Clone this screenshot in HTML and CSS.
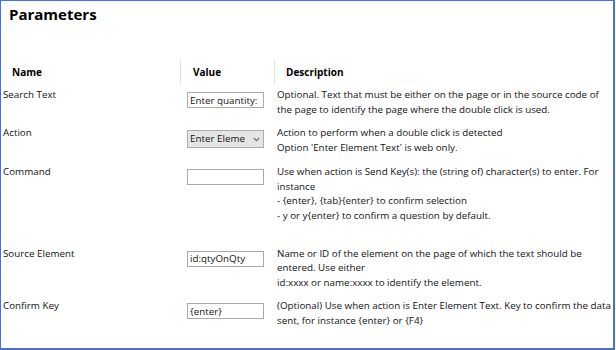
FILE: index.html
```html
<!DOCTYPE html>
<html lang="en">
<head>
<meta charset="utf-8">
<title>Parameters</title>
<link rel="stylesheet" href="styles.css">
</head>
<body>
<div class="frame">
  <h1 class="title">Parameters</h1>
  <div class="table">
    <div class="th th-name">Name</div>
    <div class="th th-sep">Value</div>
    <div class="th th-sep th-desc">Description</div>

    <div class="cell label">Search Text</div>
    <div class="cell value"><input class="field" type="text" value="Enter quantity:"></div>
    <div class="cell desc">Optional. Text that must be either on the page or in the source code of<br>the page to identify the page where the double click is used.</div>

    <div class="cell label row2">Action</div>
    <div class="cell value row2">
      <div class="dropdown"><span class="dd-text">Enter Element Text</span><svg class="dd-arrow" width="7" height="5" viewBox="0 0 7 5"><path d="M0.8 1 L3.5 3.7 L6.2 1" fill="none" stroke="#6b6b6b" stroke-width="1.1"/></svg></div>
    </div>
    <div class="cell desc row2">Action to perform when a double click is detected<br>Option 'Enter Element Text' is web only.</div>

    <div class="cell label">Command</div>
    <div class="cell value"><input class="field" type="text" value=""></div>
    <div class="cell desc">Use when action is Send Key(s): the (string of) character(s) to enter. For<br>instance<br>- {enter}, {tab}{enter} to confirm selection<br>- y or y{enter} to confirm a question by default.<br>&nbsp;</div>

    <div class="cell label">Source Element</div>
    <div class="cell value"><input class="field" type="text" value="id:qtyOnQty"></div>
    <div class="cell desc">Name or ID of the element on the page of which the text should be<br>entered. Use either<br>id:xxxx or name:xxxx to identify the element.</div>

    <div class="cell label">Confirm Key</div>
    <div class="cell value"><input class="field" type="text" value="{enter}"></div>
    <div class="cell desc">(Optional) Use when action is Enter Element Text. Key to confirm the data<br>sent, for instance {enter} or {F4}</div>
  </div>
</div>
</body>
</html>
```

FILE: styles.css
```css
* { box-sizing: border-box; }

html, body {
  margin: 0;
  padding: 0;
  background: #ffffff;
}

body {
  font-family: "Open Sans", "Noto Sans", "Liberation Sans", sans-serif;
  color: #111111;
}

.frame {
  width: 615px;
  height: 350px;
  border-style: solid;
  border-color: #4674c6;
  border-width: 1px 2px 2px 1px;
  overflow: hidden;
}

.title {
  margin: 0;
  padding: 3px 0 0 8px;
  font-size: 15px;
  line-height: 20px;
  font-weight: 700;
  color: #000000;
}

.table {
  display: grid;
  grid-template-columns: 179px 94px 1fr;
  margin-top: 36px;
  font-size: 9.8px;
  line-height: 14.5px;
}

.th {
  height: 24px;
  line-height: 24px;
  font-weight: 700;
  font-size: 10px;
  color: #000000;
  padding-left: 12px;
  margin-bottom: 4px;
}

.th-name { padding-left: 11px; }

.th-sep { border-left: 1px solid #e4e4e4; }

.th-desc { padding-left: 11px; }

.cell {
  padding-bottom: 9px;
}

.cell.row2 { padding-bottom: 10px; }

.label {
  padding-left: 2px;
}

.value {
  padding-left: 7px;
  padding-top: 4px;
}

.desc {
  padding-left: 3px;
  white-space: nowrap;
}

.field {
  display: block;
  width: 77px;
  height: 16px;
  margin: 0;
  padding: 0 2px;
  border: 1px solid #aaaaaa;
  border-radius: 0;
  background: #ffffff;
  font-family: inherit;
  font-size: 9.8px;
  line-height: 14px;
  color: #111111;
  outline: none;
}

.dropdown {
  display: flex;
  align-items: center;
  width: 77px;
  height: 18px;
  border: 1px solid #adadad;
  background: #e5e5e5;
  padding: 0 0 0 2px;
}

.dd-text {
  width: 55px;
  overflow: hidden;
  white-space: nowrap;
  line-height: 16px;
}

.dd-arrow {
  display: block;
  margin-left: 8px;
}
```
